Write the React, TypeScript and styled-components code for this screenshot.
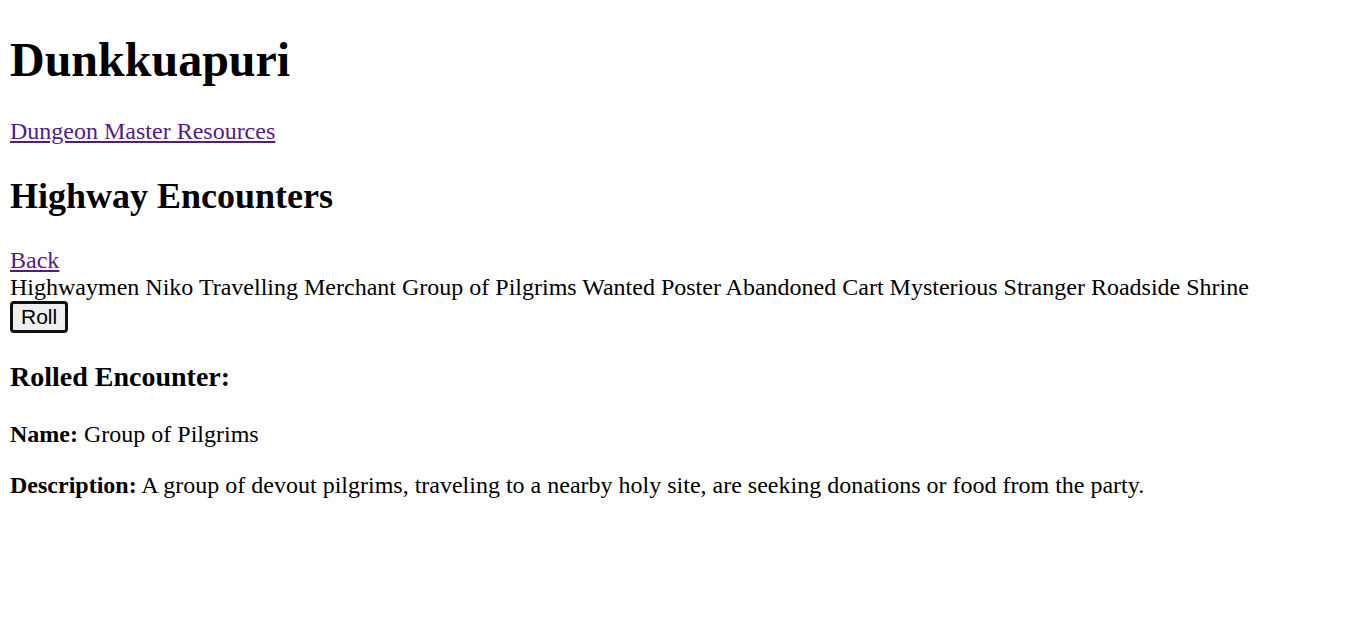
import React from "react";
import styled, { createGlobalStyle } from "styled-components";

const Global = createGlobalStyle`
  html, body { margin: 0; padding: 0; background: #fff; }
  body {
    font-family: "Liberation Serif", "Times New Roman", serif;
    font-size: 24px;
    color: #000;
  }
`;

const Page = styled.div`
  padding: 1px 10px 0;
  margin-top: -1px;
`;

const Title = styled.h1`
  font-size: 48px;
  font-weight: bold;
  margin: 32px 0 31px;
`;

const SubTitle = styled.h2`
  font-size: 36px;
  font-weight: bold;
  margin: 30px 0;
`;

const SectionTitle = styled.h3`
  font-size: 28px;
  font-weight: bold;
  margin: 28px 0;
`;

const NavLink = styled.a`
  color: #551a8b;
  text-decoration: underline;
  cursor: pointer;
`;

const Row = styled.div``;

const Options = styled.div`
  display: block;
`;

const Option = styled.span``;

const RollButton = styled.button`
  display: block;
  font-family: "Liberation Sans", Arial, sans-serif;
  font-size: 21px;
  line-height: 24px;
  padding: 1px 8px;
  margin-top: 0;
  background: #efefef;
  color: #000;
  border: 3px solid #101010;
  border-radius: 4px;
  cursor: pointer;
`;

const Para = styled.p`
  margin: 24px 0;
`;

const encounters = [
  "Highwaymen",
  "Niko",
  "Travelling Merchant",
  "Group of Pilgrims",
  "Wanted Poster",
  "Abandoned Cart",
  "Mysterious Stranger",
  "Roadside Shrine",
];

export default function App() {
  return (
    <>
      <Global />
      <Page>
        <Title>Dunkkuapuri</Title>
        <Row>
          <NavLink href="#">Dungeon Master Resources</NavLink>
        </Row>
        <SubTitle>Highway Encounters</SubTitle>
        <Row>
          <NavLink href="#">Back</NavLink>
        </Row>
        <Options>
          {encounters.map((e, i) => (
            <React.Fragment key={e}>
              <Option>{e}</Option>
              {i < encounters.length - 1 ? " " : null}
            </React.Fragment>
          ))}
        </Options>
        <RollButton>Roll</RollButton>
        <SectionTitle>Rolled Encounter:</SectionTitle>
        <Para>
          <strong>Name:</strong> Group of Pilgrims
        </Para>
        <Para>
          <strong>Description:</strong> A group of devout pilgrims, traveling to a nearby holy site, are seeking donations or food from the party.
        </Para>
      </Page>
    </>
  );
}
